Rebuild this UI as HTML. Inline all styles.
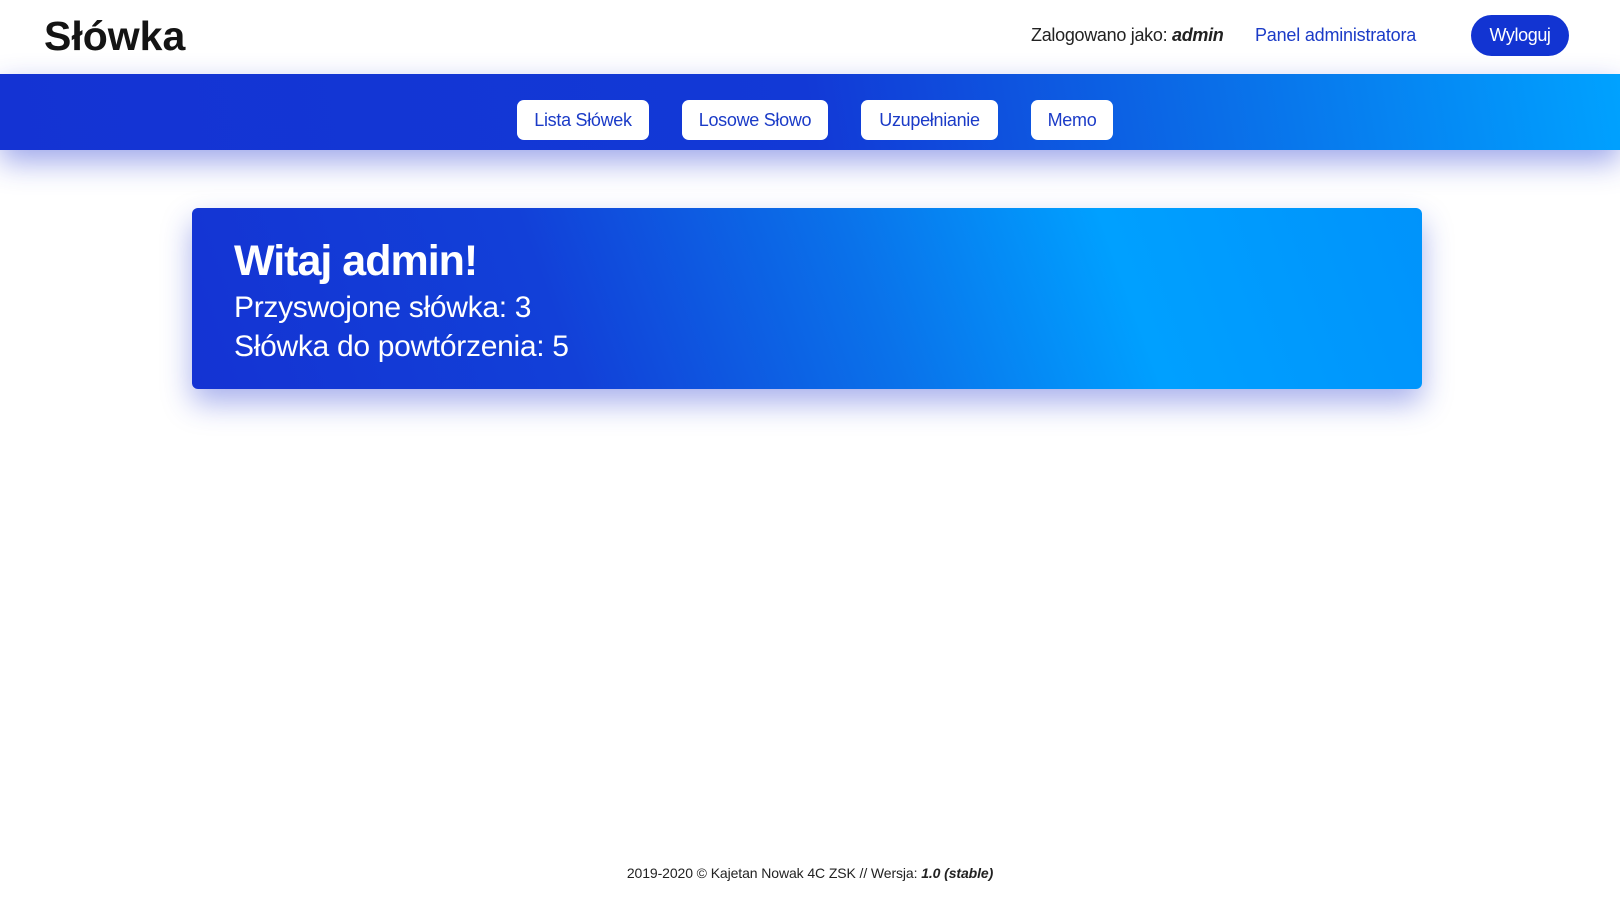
<!DOCTYPE html>
<html><head><meta charset="utf-8"><style>
*{margin:0;padding:0;box-sizing:border-box}
body{width:1620px;height:901px;background:#fff;font-family:"Liberation Sans",sans-serif;position:relative;overflow:hidden}
.hdr{position:absolute;left:0;top:0;width:1620px;height:74px;background:#fff}
.logo{position:absolute;left:44px;top:13px;font-size:41px;font-weight:bold;color:#141414;letter-spacing:0px}
.who{position:absolute;left:1031px;top:25px;font-size:18px;color:#222;letter-spacing:-0.3px}
.who i{font-weight:bold}
.adm{position:absolute;left:1255px;top:25px;font-size:18px;color:#1b3bc7;letter-spacing:-0.2px}
.out{position:absolute;left:1471px;top:15px;width:98px;height:41px;border-radius:21px;background:#1234d2;color:#fff;font-size:18px;text-align:center;line-height:41px;letter-spacing:-0.4px}
.nav{position:absolute;left:0;top:74px;width:1620px;height:76px;background:linear-gradient(80deg,#1433d3 0%,#1239d6 50%,#0a6ee8 75%,#00a2ff 100%);box-shadow:0 12px 30px rgba(40,60,210,0.45)}
.b{position:absolute;top:26px;height:40px;background:#fff;border-radius:7px;color:#1b3bc7;font-size:18px;text-align:center;line-height:40px;letter-spacing:-0.3px}
.card{position:absolute;left:192px;top:208px;width:1230px;height:181px;border-radius:6px;background:linear-gradient(70deg,#1433d3 0%,#1240d8 30%,#0a72ea 55%,#00a0ff 75%,#0093fb 100%);box-shadow:0 14px 30px rgba(40,60,210,0.4);color:#fff}
.card h1{position:absolute;left:42px;top:29px;font-size:43px;font-weight:bold;letter-spacing:-1px}
.card p{position:absolute;left:42px;font-size:30px;letter-spacing:-0.3px}
.ft{position:absolute;left:0;width:1620px;top:865px;text-align:center;font-size:14px;color:#222;letter-spacing:-0.1px}
.ft i{font-weight:bold}
</style></head><body>
<div class="hdr">
<div class="logo">Słówka</div>
<div class="who">Zalogowano jako: <i>admin</i></div>
<div class="adm">Panel administratora</div>
<div class="out">Wyloguj</div>
</div>
<div class="nav">
<div class="b" style="left:517px;width:132px">Lista Słówek</div>
<div class="b" style="left:682px;width:146px">Losowe Słowo</div>
<div class="b" style="left:861px;width:137px">Uzupełnianie</div>
<div class="b" style="left:1031px;width:82px">Memo</div>
</div>
<div class="card">
<h1>Witaj admin!</h1>
<p style="top:83px">Przyswojone słówka: 3</p>
<p style="top:122px">Słówka do powtórzenia: 5</p>
</div>
<div class="ft">2019-2020 © Kajetan Nowak 4C ZSK // Wersja: <i>1.0 (stable)</i></div>
</body></html>
